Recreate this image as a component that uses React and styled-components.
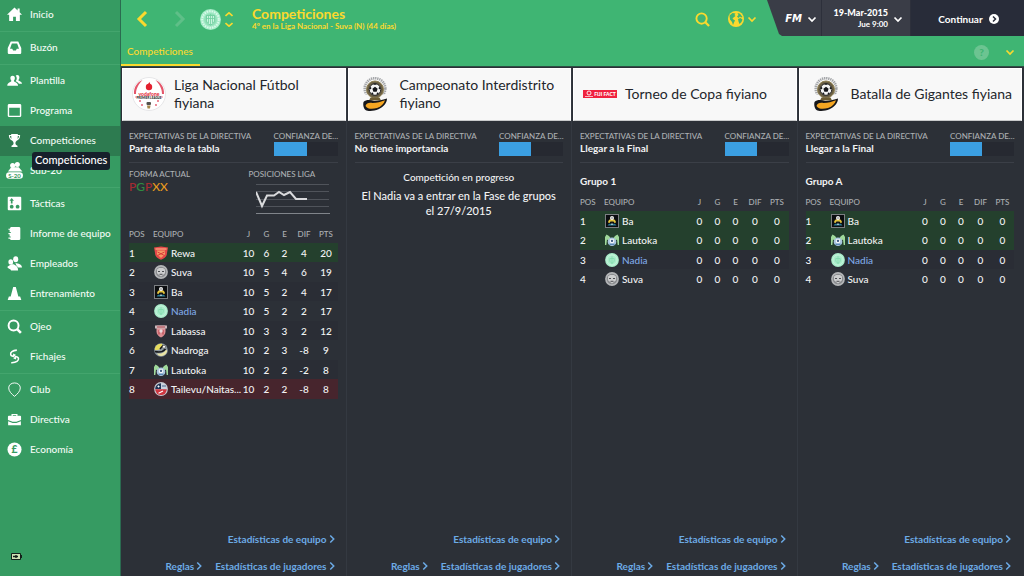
import React from "react";
import styled, { createGlobalStyle, css } from "styled-components";

const GlobalStyle = createGlobalStyle`
  *, *::before, *::after { box-sizing: border-box; }
  body {
    margin: 0;
    background: #2c3037;
    color: #f2f3f4;
    font-family: Lato, "Liberation Sans", sans-serif;
    font-size: 10px;
    font-weight: 500;
    line-height: 12px;
  }
  h1, h2, h3, p, ul, dl, dd { margin: 0; padding: 0; }
  ul { list-style: none; }
  a { color: inherit; text-decoration: none; }
  button { font: inherit; color: inherit; background: none; border: 0; padding: 0; cursor: pointer; }
  svg { display: block; flex: none; }
`;

/* ---------- shell ---------- */

const Shell = styled.div`
  display: grid;
  grid-template-columns: 120px minmax(0, 1fr);
  min-height: 100vh;
`;

const Sidebar = styled.nav`
  display: flex;
  flex-direction: column;
  background: #369b62;
`;

const NavGroup = styled.ul`
  padding-bottom: 1px;
  & + & {
    border-top: 1px solid #43a56d;
    padding-top: 1px;
  }
`;

const NavItem = styled.li`
  position: relative;
`;

const NavLink = styled.a`
  display: flex;
  align-items: center;
  gap: 8px;
  height: 30px;
  padding: 0 0 2px 7px;
  color: #f4fbf6;
  background: ${(p) => (p.$active ? "#2d7b50" : "transparent")};
`;

const Tooltip = styled.span`
  position: absolute;
  z-index: 2;
  left: 32px;
  top: 26px;
  padding: 2px 3px 4px;
  border-radius: 3px;
  background: #17202b;
  color: #fff;
  font-size: 11px;
  white-space: nowrap;
`;

const SidebarFoot = styled.div`
  margin-top: auto;
  padding: 0 0 16px 11px;
`;

const Main = styled.main`
  display: flex;
  flex-direction: column;
  border-left: 1px solid #2b6b50;
`;

/* ---------- header ---------- */

const Header = styled.header`
  background: #3fb573;
  color: #fbd92e;
  border-bottom: 1px solid #2c4f44;
`;

const TopBar = styled.div`
  display: flex;
  height: 36px;
  align-items: stretch;
`;

const History = styled.div`
  display: flex;
  align-items: center;
  gap: 26px;
  padding: 2px 0 0 16px;
`;

const ClubPicker = styled.button`
  display: flex;
  align-items: center;
  gap: 4px;
  margin: 2px 19px 0 15px;
`;

const Heading = styled.div`
  flex: 1;
  min-width: 0;
  padding-top: 6px;
`;

const PageTitle = styled.h1`
  font-size: 14px;
  line-height: 15px;
  font-weight: 700;
`;

const Subtitle = styled.p`
  font-size: 8px;
  line-height: 11px;
  font-weight: 700;
`;

const Tools = styled.div`
  display: flex;
  align-items: center;
  gap: 18px;
  padding: 2px 4px 0 0;
`;

const WorldButton = styled.button`
  display: flex;
  align-items: center;
  gap: 4px;
`;

const StatusPanel = styled.div`
  display: flex;
  margin-left: 7px;
  color: #fff;
  background: #3a3d47;
  clip-path: polygon(0 0, 100% 0, 100% 100%, 15px 100%, 12px 34px);
`;

const MenuButton = styled.button`
  display: flex;
  align-items: center;
  justify-content: flex-end;
  gap: 6px;
  width: ${(p) => p.$width}px;
  padding-right: ${(p) => p.$pad}px;
  padding-top: 2px;
  border-right: 1px solid #2d303b;
`;

const FmMark = styled.span`
  font-family: "DejaVu Sans", sans-serif;
  font-size: 10px;
  font-style: italic;
  font-weight: 700;
`;

const DateText = styled.span`
  display: flex;
  flex-direction: column;
  text-align: right;
  font-size: 8px;
  line-height: 10px;
  font-weight: 700;
  padding-bottom: 3px;
  strong { font-size: 9px; line-height: 13px; }
`;

const ContinueButton = styled.button`
  display: flex;
  align-items: center;
  justify-content: center;
  gap: 6px;
  width: 113px;
  padding: 2px 0 0 2px;
  background: #282c39;
  font-weight: 700;
`;

const TabBar = styled.div`
  display: flex;
  height: 30px;
  align-items: stretch;
  justify-content: space-between;
`;

const Tab = styled.a`
  display: flex;
  align-items: center;
  width: 79px;
  padding: 2px 0 0 6px;
  border-bottom: 2px solid #fbd92e;
`;

const TabTools = styled.div`
  display: flex;
  align-items: center;
  gap: 17px;
  padding: 2px 10px 0 0;
`;

/* ---------- competition columns ---------- */

const Board = styled.div`
  flex: 1;
  display: grid;
  grid-template-columns: repeat(4, minmax(0, 1fr));
  gap: 1px;
  padding: 1px 2px 0 0;
`;

const Column = styled.section`
  display: flex;
  flex-direction: column;
  box-shadow: 1px 0 0 #343941;
  &:last-child { box-shadow: none; }
`;

const Card = styled.header`
  display: grid;
  grid-template-columns: 34px 1fr;
  align-items: center;
  gap: 8px;
  height: 53px;
  margin: 0 0 0 1px;
  padding: 0 2px 2px 9px;
  background: #f8f8f8;
  border: 1px solid #fff;
  border-bottom-color: #c9cbcc;
  color: #23262b;
`;

const CardTitle = styled.h2`
  font-size: 14px;
  line-height: 18px;
  font-weight: 400;
`;

const Body = styled.div`
  flex: 1;
  display: flex;
  flex-direction: column;
  padding: 9px 8px 0;
`;

const Expect = styled.dl`
  display: grid;
  grid-template-columns: 1fr 64px;
  height: 33px;
  border-bottom: 1px solid #3b3f47;
`;

const Label = styled.dt`
  font-size: 8px;
  line-height: 12px;
  color: #adb0b4;
  white-space: nowrap;
`;

const Strong = styled.dd`
  font-weight: 700;
  line-height: 13px;
`;

const Meter = styled.dd`
  height: 14px;
  background: #262931;
`;

const MeterFill = styled.div`
  height: 100%;
  background: #3b9fe2;
`;

const FormRow = styled.dl`
  display: flex;
  justify-content: space-between;
  padding: 5px 8px 0 0;
  height: 62px;
`;

const Form = styled.dd`
  font-size: 12px;
  line-height: 14px;
`;

const FormMark = styled.span`
  color: ${(p) => ({ P: "#a52c31", G: "#2f8b41", X: "#e89a1e" })[p.$kind]};
`;

const ChartBox = styled.dd`
  padding: 3px 0 0 7px;
`;

const Progress = styled.div`
  padding: 8px 4px 0;
  text-align: center;
`;

const ProgressText = styled.p`
  margin-top: 5px;
  font-size: 11px;
  line-height: 15px;
`;

const GroupTitle = styled.h3`
  padding-top: 12px;
  height: 30px;
  font-size: 10px;
  line-height: 13px;
  font-weight: 700;
`;

const Table = styled.table`
  width: 100%;
  table-layout: fixed;
  border-collapse: collapse;
`;

const Th = styled.th`
  width: ${(p) => (p.$width ? p.$width + "px" : "auto")};
  height: 18px;
  padding: 0;
  font-size: 8px;
  line-height: 12px;
  font-weight: 500;
  color: #adb0b4;
  text-align: ${(p) => (p.$left ? "left" : "center")};
`;

const Tr = styled.tr`
  height: 19px;
  &:nth-child(even) { height: 20px; }
  &:nth-child(odd) { background: #2a2d35; }
  ${(p) => p.$tone === "up" && css`&&& { background: #24402d; }`}
  ${(p) => p.$tone === "down" && css`&&& { background: #47252d; }`}
`;

const Td = styled.td`
  padding: 0;
  text-align: ${(p) => (p.$left ? "left" : "center")};
`;

const Team = styled.a`
  display: flex;
  align-items: center;
  gap: 3px;
  padding-left: 1px;
  white-space: nowrap;
  color: ${(p) => (p.$own ? "#7fa9e6" : "inherit")};
`;

const Links = styled.footer`
  display: flex;
  flex-wrap: wrap;
  justify-content: flex-end;
  gap: 15px 13px;
  margin-top: auto;
  padding: 0 3px 4px 0;
  color: #6cabe6;
  font-weight: 700;
`;

const MoreLink = styled.a`
  display: flex;
  align-items: center;
  gap: 2px;
  &:first-child { margin-left: 60px; }
`;

/* ---------- icons ---------- */

const Chevron = ({ dir = "down", w = 8, h = 5, stroke = 1.7, color = "currentColor" }) => {
  const pts = {
    down: "0.500,0.500 4,4 7.500,0.500",
    up: "1,4 4,1 7,4",
    left: "8,1 1,8 8,15",
    right: "1,1 8,8 1,15",
  }[dir];
  const box = dir === "down" || dir === "up" ? "0 0 8 5" : "-1 0 11 16";
  return (
    <svg width={w} height={h} viewBox={box} fill="none" stroke={color} strokeWidth={stroke} overflow="visible" aria-hidden="true">
      <polyline points={pts} />
    </svg>
  );
};

const navIcons = {
  home: <path d="M8 .500 0 8.200h2.300V15h4.200v-4.500h3V15h4.200V8.200H16L13.500 5.700V1.500h-2.200v2.200z" />,
  inbox: <path fillRule="evenodd" d="M4 1.500h8l3.200 7v5.200a1.300 1.300 0 0 1-1.300 1.300H2.100A1.300 1.300 0 0 1 .8 13.700V8.500zM5.200 3.800 3.200 9.300h2.400l.9 2h3l.9-2h2.400l-2-5.500z" />,
  squad: (
    <>
      <path d="M10.800 2c1.800 0 2.600 1.300 2.400 3-.1 1.200-.6 2-1.100 2.500 0 1.200 3.900 1.400 3.900 4h-3.300c-.6-1.500-2-2.300-3.400-2.800.6-.6 1.100-1.700 1.100-3 0-1.200-.4-2-1.100-2.700.4-.6.900-1 1.500-1z" />
      <path d="M6 2.800c1.800 0 2.600 1.300 2.400 2.900-.1 1.300-.6 2.100-1.100 2.600 0 1.500 4.500 1.600 4.500 5.200H.3c0-3.600 4.400-3.700 4.400-5.200-.5-.5-1-1.300-1.100-2.600C3.400 4.100 4.200 2.800 6 2.800z" />
    </>
  ),
  calendar: <path fillRule="evenodd" d="M2.300 1h11.400A1.500 1.500 0 0 1 15.200 2.500v11a1.500 1.500 0 0 1-1.500 1.500H2.300a1.500 1.500 0 0 1-1.500-1.500v-11A1.500 1.500 0 0 1 2.300 1zM2.300 5v8.500h11.400V5z" />,
  cup: <path fillRule="evenodd" d="M4.500 1h7l.1 1.200H14c0 3-1 5.200-3.700 6-.6.8-1.300 1.300-1.300 2.800 0 1.200.8 2 2.200 2.500V15H4.800v-1.500C6.200 13 7 12.200 7 11c0-1.500-.7-2-1.300-2.800C3 7.400 2 5.200 2 2.200h2.400zM3.200 3.300c.2 1.400.6 2.400 1.500 3.100l-.2-3.100zm9.600 0h-1.300l-.2 3.100c.9-.7 1.300-1.700 1.500-3.100z" />,
  tactics: <path fillRule="evenodd" d="M1.800.8h12.400a1 1 0 0 1 1 1v12.400a1 1 0 0 1-1 1H1.800a1 1 0 0 1-1-1V1.800a1 1 0 0 1 1-1zM5 2.200 2.600 5h1.500v3h1.800V5h1.500zM5 9.400a2 2 0 1 0 .01 0zM11.300 9.400a2 2 0 1 0 .01 0z" />,
  report: <path fillRule="evenodd" d="M4 1h8.700a1.500 1.500 0 0 1 1.500 1.500v11a1.500 1.500 0 0 1-1.500 1.500H4L3 13.500H1.500v-1.200H4v-1.100H2.800V8.700H1.500V7.400H4V6.300H2.800V4H1.500V2.800H3z" />,
  staff: (
    <>
      <ellipse cx="9.300" cy="3.500" rx="2.700" ry="3.200" />
      <ellipse cx="4" cy="6.300" rx="2.500" ry="2.800" />
      <path d="M9 7.500c3 .4 7 1.600 7 4.800h-4L10 10zM4 9C6.500 8.500 8.500 9 9.500 10.500c1.500 1 2.300 2.500 2.300 5H4.300C3.800 13 .5 14 .5 11.500z" />
    </>
  ),
  cone: <path d="M6.600 1h2.800l2.700 10.300H14l1.300 3.700H.7L2 11.300h1.900z" />,
  search: (
    <g fill="none" stroke="currentColor">
      <circle cx="7" cy="7" r="5.300" strokeWidth="2.100" />
      <path d="m10.800 10.800 4 4" strokeWidth="2.800" />
    </g>
  ),
  transfer: (
    <g fill="none" stroke="currentColor" strokeWidth="1.700">
      <path d="M10.500 1.200C6 1.500 3.200 3.700 4 6.200c.5 1.500 2 1.800 3.600 1" />
      <path d="M4.500 14.600c5.500.2 8.300-2.200 7.700-4.700-.4-1.500-2-2-3.600-1.200" />
      <path d="M6.500 4.800v4.500L9.500 6zM9.700 6.700v4.500L6.700 10z" fill="currentColor" stroke="none" />
    </g>
  ),
  club: <path fill="none" stroke="currentColor" strokeWidth="1" d="M8 1c3.500 0 6.200 2.200 6.200 5.300C14.200 10 11 12.800 8 15.300 5 12.800 1.800 10 1.800 6.300 1.800 3.200 4.500 1 8 1z" />,
  board: <path fillRule="evenodd" d="M4.800 4V2h6.400v2H14a1 1 0 0 1 1 1v3.500L10 10.300H6L1 8.500V5a1 1 0 0 1 1-1zm1.400 0h3.600v-.9H6.200zM1.200 9.900 6 11.700h4l4.800-1.800V14H1.200z" />,
  youth: (
    <>
      <g transform="translate(1 -3)">
        <circle cx="10" cy="4.600" r="2.700" />
        <circle cx="5" cy="5.600" r="2.700" />
        <path d="M3.500 7.500h8l4 4.500H0z" />
      </g>
      <rect x="-1" y="9.800" width="18" height="7" rx="3.500" />
      <text x="8" y="15.600" fontSize="6.500" fontWeight="700" textAnchor="middle" fill="#369b62">S-20</text>
    </>
  ),
  money: (
    <>
      <circle cx="8" cy="8" r="7.500" />
      <text x="8" y="12" fontSize="11" fontWeight="900" textAnchor="middle" fill="#369b62">£</text>
    </>
  ),
};

const NavIcon = ({ name }) => (
  <svg width="15" height="15" viewBox="0 0 16 16" fill="currentColor" color="#fff" overflow="visible" aria-hidden="true">
    {navIcons[name]}
  </svg>
);

const Battery = () => (
  <svg width="11" height="7" viewBox="0 0 11 7" role="img" aria-label="Batería">
    <rect width="10" height="7" rx="1" fill="#14201a" />
    <rect x="10" y="2" width="1" height="3" fill="#14201a" />
    <rect x="1" y="1" width="8" height="5" fill="#cfe0b4" />
    <path d="M2 3.500h5M5 2v3" stroke="#14201a" strokeWidth="1.400" />
  </svg>
);

const Globe = () => (
  <svg width="16" height="16" viewBox="0 0 16 16" aria-hidden="true">
    <circle cx="8" cy="8" r="8" fill="#fbd92e" />
    <path fill="#3fb573" d="M1.500 4.500 4.500 2l3 .5-1 1.500 1 1L5.500 6.500l-1 1.300L7 9.500l-1 2L5 14l-1-3-2-2.500zM9.500 2l2.500.700 2.500 3.300-1.500.5-1-1-1.500 1.500L9 5.500l1.500-1.500zM10 8l2.500-1 2 1.500-1 2.500-2 2-1-2.500z" />
  </svg>
);

/* ---------- crests ---------- */

const crestArt = {
  Rewa: (
    <>
      <path d="M0 1.500 7 .5l7 1L13 7c0 3.500-2.500 5.500-6 6.700C3.500 12.500 1 10.500 1 7z" fill="#e5484a" />
      <path d="M1.500 2h11v2h-11z" fill="#f2866c" />
      <path d="M3 4.500h8v3.800L7 12 3 8.300z" fill="#f39a63" />
      <path d="m3.500 6 7 3.500M10.500 6l-7 3.500" stroke="#da3c3c" />
    </>
  ),
  Suva: (
    <>
      <circle cx="7" cy="7" r="6.900" fill="#b4b6b8" />
      <circle cx="7" cy="7" r="5.300" fill="#8a8c8f" />
      <path d="M3 4.500 5 3h4l2 1.500v3.700L7 11.500 3 8.200z" fill="#cdcecf" />
      <path d="M4 6.500h2M8 6.500h2M5.500 9.300h3" stroke="#4b4d51" />
    </>
  ),
  Ba: (
    <>
      <rect x=".5" y=".5" width="13" height="13" fill="#0b0d10" stroke="#7b7e82" />
      <path d="M3 8.500C3 6 5 5 7 5s4 1 4 3.500L9.500 9 8.500 7.500h-3L4.500 9z" fill="#e2c33c" />
      <circle cx="7" cy="4" r="2" fill="#f2f2f2" />
      <path d="M6.500 3.500h1v1h-1z" fill="#222" />
      <path d="M2.500 11.500 4 9.800h6l1.500 1.700z" fill="#2c7f96" />
      <path d="m6.300 11 .7-2.500.7 2.500z" fill="#eee" />
    </>
  ),
  Nadia: (
    <>
      <circle cx="7" cy="7" r="6.900" fill="#a9ecca" />
      <circle cx="7" cy="7" r="5.100" fill="none" stroke="#cdf5e0" strokeWidth=".8" />
      <path d="M7 3.200v7.600M4.800 5.500h4.400v2.700L7 10.500 4.800 8.200z" fill="none" stroke="#7bd9a9" strokeWidth=".7" />
    </>
  ),
  Labassa: (
    <>
      <path d="M2.500 1.500h9v6.300c0 2.500-1.800 4.500-4.500 5.800-2.700-1.300-4.500-3.300-4.500-5.800z" fill="#dc8f94" />
      <path d="M1 1.500h12v3H1z" fill="#c9b7bb" />
      <path d="M3 3h8M5 6v4.500M9 6v4.500" stroke="#b8434b" strokeWidth="1.100" />
      <circle cx="7" cy="7" r="1.700" fill="#e9dadd" />
    </>
  ),
  Nadroga: (
    <>
      <circle cx="7" cy="7" r="6.800" fill="#8c98a0" />
      <path d="M.8 5.500C1.500 2.500 4.500.5 8 .8l1 3-4 3-4 .5z" fill="#e7dc5e" />
      <path d="M3 10.500c4 .5 7-.5 9-4l1.300 1.500c-.8 3-3.800 5-6.300 5s-3-1-4-2.500z" fill="#e9e4a4" />
      <path d="M1 8.500c4 1 8 .5 10.500-2.500M6 6l3-3.500" stroke="#17191c" strokeWidth="1.500" fill="none" />
      <circle cx="10" cy="3.800" r="1.500" fill="#fff" stroke="#333" strokeWidth=".5" />
    </>
  ),
  Lautoka: (
    <>
      <path d="M0 12V4l1.500-2.500L4 3l1.500 2h3L10 3l2.500-1.500L14 4v8h-1.300L12 6.500 10 8H4L2 6.500 1.300 12z" fill="#9fd89a" />
      <circle cx="7" cy="8.800" r="4.300" fill="#a9c6de" />
      <circle cx="7" cy="8" r="2.300" fill="#f4f6f8" />
      <path d="m7 6.600 1.200.9-.5 1.400H6.300l-.5-1.400z" fill="#3c5a80" />
      <path d="M4.500 11.300h5" stroke="#4878a8" />
    </>
  ),
  Tailevu: (
    <>
      <circle cx="7" cy="7" r="6.900" fill="#c7ccd3" />
      <path d="M1.200 7A5.800 5.800 0 0 1 7 1.200V7z" fill="#1f3556" />
      <path d="M7 1.200A5.800 5.800 0 0 1 12.800 7H7z" fill="#c9d3df" />
      <path d="M1.200 7.300h11.600A5.800 5.800 0 0 1 1.200 7.300z" fill="#cf3640" />
      <path d="M4.500 11.300 9 9M3.500 4.500h2M4.500 3.500v2" stroke="#fff" strokeWidth="1.100" />
      <path d="M8 4h4" stroke="#4a6288" />
    </>
  ),
};

const Crest = ({ name, size = 14 }) => (
  <svg width={size} height={size} viewBox="0 0 14 14" aria-hidden="true">
    {crestArt[name]}
  </svg>
);

const ClubBadge = () => (
  <svg width="21" height="21" viewBox="0 0 21 21" fill="none" aria-hidden="true">
    <circle cx="10.500" cy="10.500" r="10.500" fill="#a5ebc8" />
    <circle cx="10.500" cy="10.500" r="8.300" stroke="#dcf9ea" strokeWidth="2" strokeDasharray="1.500 1" />
    <circle cx="10.500" cy="10.500" r="6.300" fill="#8fe0b6" />
    <path d="M6.500 6.500h8v5c0 2-1.800 3.500-4 4.500-2.200-1-4-2.500-4-4.500z" fill="#c9f5de" stroke="#5fc492" strokeWidth=".7" />
    <path d="M10.500 5v11M6.500 9.500h8M8.500 7v7M12.500 7v7" stroke="#6fcf9f" strokeWidth=".8" />
  </svg>
);

const LeagueLogo = () => (
  <svg width="34" height="34" viewBox="0 0 34 34" aria-hidden="true">
    <circle cx="17" cy="17" r="16.500" fill="#fff" stroke="#e6e6e8" />
    <path d="M2 17C1.500 10 5.500 5 10.500 3 7 7 4 11 4 17zM32 17C32.500 10 28.500 5 23.500 3c3.500 4 6.500 8 6.500 14z" fill="#e4566a" />
    <circle cx="17" cy="10" r="3.200" fill="#e3202f" />
    <path d="m15 8.500 2.500-3.500 1.300 3.500z" fill="#e3202f" />
    <text x="17" y="18.500" fontSize="5" fontWeight="900" textAnchor="middle" fill="#e3303c">vodafone</text>
    <text x="17" y="22" fontSize="3" fontWeight="900" textAnchor="middle" fill="#222">PREMIER LEAGUE</text>
    <rect x="14.500" y="25" width="4.500" height="3" rx="1" fill="#55534f" />
    <path d="M15 28.500h3.500L18 31.500h-2.500z" fill="#a98a4c" />
    <g fill="#e4566a">
      <circle cx="8" cy="24" r=".9" /><circle cx="10" cy="28" r=".9" />
      <circle cx="26" cy="24" r=".9" /><circle cx="24" cy="28" r=".9" />
      <circle cx="4" cy="20" r=".7" /><circle cx="30" cy="20" r=".7" />
    </g>
  </svg>
);

const FederationLogo = () => (
  <svg width="34" height="34" viewBox="0 0 34 34" aria-hidden="true">
    <circle cx="17" cy="11.500" r="10.300" fill="none" stroke="#a3a5a8" strokeWidth="2.600" strokeDasharray="1.400 .7" />
    <path d="M5 17.500h24V26H5z" fill="#f8f8f8" />
    <circle cx="17" cy="12.500" r="8.500" fill="#6b6045" stroke="#8f8052" />
    <circle cx="17" cy="12.500" r="5.800" fill="#f4f4f4" stroke="#222" />
    <path d="m17 9.800 2.600 1.900-1 3h-3.200l-1-3z" fill="#15161a" />
    <path d="m15.300 7.100 1.700-.6 1.700.6-1.700 1zM11.700 11.500l.8-2 .9 1.500-.5 1.600zM22.300 11.500l-.8-2-.9 1.500.5 1.600zM13.500 16.700l.5-1.600 1.500 1.600-.500 1zM20.500 16.700l-.5-1.600-1.500 1.600.5 1z" fill="#15161a" />
    <path d="M12.500 20.500h9l1.500 3H11z" fill="#6c5c33" />
    <path d="M5.500 25c2.500-2.500 6.500-2.500 10.500-1 3 .3 7.500-1 13-2.500 0 4.500-3.500 8.500-8.500 10.800-4.500 1.900-10.500 2.200-13 .7-2-1.500-2.700-5-2-8z" fill="#17171a" />
    <path d="M7.500 29c.8-3.300 4-3.500 7-3 4.500 0 8.500-1.500 12.500-2.800-1 3.300-3.500 6.300-8 7.800-4.500 1.300-9.500 1.300-11.500-2z" fill="#f5a622" />
  </svg>
);

const CupLogo = () => (
  <svg width="34" height="34" viewBox="0 0 34 34" aria-hidden="true">
    <rect y="13" width="34" height="8" fill="#f0223f" />
    <circle cx="6" cy="16" r="2" fill="none" stroke="#fff" strokeWidth=".9" />
    <path d="M2 19.500h8" stroke="#f7b6bf" />
    <text x="22" y="19.200" fontSize="5" fontWeight="900" textAnchor="middle" fill="#fff">FIJI FACT</text>
  </svg>
);

const LeagueChart = () => (
  <svg width="74" height="32" viewBox="0 0 74 32" role="img" aria-label="Posiciones en la liga">
    <g stroke="#50545b">
      <path d="M0 1.500h73M0 8.500h73M0 16.500h73M0 23.500h73" />
    </g>
    <path d="M0 30.500h74" stroke="#80848a" />
    <polyline points="0,9 6,23 11,12.500 18,12.500 23,9 28,12 34,9 40,16 51,16" fill="none" stroke="#d9dadc" strokeWidth="2" />
  </svg>
);

/* ---------- data ---------- */

const nav = [
  [["home", "Inicio"]],
  [["inbox", "Buzón"]],
  [["squad", "Plantilla"], ["calendar", "Programa"], ["cup", "Competiciones"], ["youth", "Sub-20"]],
  [["tactics", "Tácticas"], ["report", "Informe de equipo"], ["staff", "Empleados"], ["cone", "Entrenamiento"]],
  [["search", "Ojeo"], ["transfer", "Fichajes"]],
  [["club", "Club"], ["board", "Directiva"], ["money", "Economía"]],
];

const league = [
  ["Rewa", "Rewa", [10, 6, 2, 4, 20], "up"],
  ["Suva", "Suva", [10, 5, 4, 6, 19]],
  ["Ba", "Ba", [10, 5, 2, 4, 17]],
  ["Nadia", "Nadia", [10, 5, 2, 2, 17]],
  ["Labassa", "Labassa", [10, 3, 3, 2, 12]],
  ["Nadroga", "Nadroga", [10, 2, 3, -8, 9]],
  ["Lautoka", "Lautoka", [10, 2, 2, -2, 8]],
  ["Tailevu", "Tailevu/Naitas...", [10, 2, 2, -8, 8], "down"],
];

const zeros = [0, 0, 0, 0, 0];
const group = [
  ["Ba", "Ba", zeros, "up"],
  ["Lautoka", "Lautoka", zeros, "up"],
  ["Nadia", "Nadia", zeros],
  ["Suva", "Suva", zeros],
];

/* ---------- pieces ---------- */

const Standings = ({ rows }) => (
  <Table>
    <thead>
      <tr>
        <Th $left $width={24}>POS</Th>
        <Th $left>EQUIPO</Th>
        <Th $width={18}>J</Th>
        <Th $width={18}>G</Th>
        <Th $width={18}>E</Th>
        <Th $width={21}>DIF</Th>
        <Th $width={23}>PTS</Th>
      </tr>
    </thead>
    <tbody>
      {rows.map(([id, name, stats, tone], i) => (
        <Tr key={id} $tone={tone}>
          <Td $left>{i + 1}</Td>
          <Td $left>
            <Team href="#" $own={id === "Nadia"}>
              <Crest name={id} />
              <span>{name}</span>
            </Team>
          </Td>
          {stats.map((n, k) => <Td key={k}>{n}</Td>)}
        </Tr>
      ))}
    </tbody>
  </Table>
);

const More = ({ children }) => (
  <MoreLink href="#">
    {children}
    <Chevron dir="right" w={6} h={8} stroke={3} />
  </MoreLink>
);

const Competition = ({ logo, title, goal, trust, children }) => (
  <Column>
    <Card>
      {logo}
      <CardTitle>{title}</CardTitle>
    </Card>
    <Body>
      <Expect>
        <div>
          <Label>EXPECTATIVAS DE LA DIRECTIVA</Label>
          <Strong>{goal}</Strong>
        </div>
        <div>
          <Label>CONFIANZA DE...</Label>
          <Meter>
            <MeterFill style={{ width: `${trust}%` }} />
          </Meter>
        </div>
      </Expect>
      {children}
      <Links>
        <More>Estadísticas de equipo</More>
        <More>Reglas</More>
        <More>Estadísticas de jugadores</More>
      </Links>
    </Body>
  </Column>
);

export default function App() {
  return (
    <Shell>
      <GlobalStyle />
      <Sidebar>
        {nav.map((items, i) => (
          <NavGroup key={i}>
            {items.map(([icon, label]) => (
              <NavItem key={label}>
                <NavLink href="#" $active={icon === "cup"}>
                  <NavIcon name={icon} />
                  {label}
                </NavLink>
                {icon === "cup" && <Tooltip role="tooltip">{label}</Tooltip>}
              </NavItem>
            ))}
          </NavGroup>
        ))}
        <SidebarFoot><Battery /></SidebarFoot>
      </Sidebar>

      <Main>
        <Header>
          <TopBar>
            <History>
              <button aria-label="Atrás"><Chevron dir="left" w={11} h={16} stroke={3} /></button>
              <button aria-label="Adelante"><Chevron dir="right" w={11} h={16} stroke={3} color="#5fbf88" /></button>
            </History>
            <ClubPicker aria-label="Cambiar de club">
              <ClubBadge />
              <svg width="8" height="15" viewBox="0 0 8 15" fill="none" stroke="currentColor" strokeWidth="1.600" aria-hidden="true">
                <path d="M.5 4 4 .8 7.500 4M.5 11 4 14.200 7.500 11" />
              </svg>
            </ClubPicker>
            <Heading>
              <PageTitle>Competiciones</PageTitle>
              <Subtitle>4º en la Liga Nacional - Suva (N) (44 días)</Subtitle>
            </Heading>
            <Tools>
              <button aria-label="Buscar">
                <svg width="15" height="15" viewBox="0 0 16 16" fill="none" stroke="currentColor" strokeWidth="2" aria-hidden="true">
                  <circle cx="7" cy="7" r="5.500" />
                  <path d="m11 11 4 4" strokeWidth="2.400" />
                </svg>
              </button>
              <WorldButton aria-label="Mundo">
                <Globe />
                <Chevron />
              </WorldButton>
            </Tools>
            <StatusPanel>
              <MenuButton $width={55} $pad={5} aria-label="Menú de FM">
                <FmMark>FM</FmMark>
                <Chevron />
              </MenuButton>
              <MenuButton $width={89} $pad={8}>
                <DateText>
                  <strong>19-Mar-2015</strong>
                  <span>Jue 9:00</span>
                </DateText>
                <Chevron />
              </MenuButton>
              <ContinueButton>
                Continuar
                <svg width="10" height="10" viewBox="0 0 10 10" aria-hidden="true">
                  <circle cx="5" cy="5" r="5" fill="#fff" />
                  <path d="m4 2.500 2.500 2.500L4 7.500" fill="none" stroke="#282c39" strokeWidth="1.500" />
                </svg>
              </ContinueButton>
            </StatusPanel>
          </TopBar>
          <TabBar>
            <Tab href="#" aria-current="page">Competiciones</Tab>
            <TabTools>
              <button aria-label="Ayuda">
                <svg width="15" height="15" viewBox="0 0 15 15" aria-hidden="true">
                  <circle cx="7.500" cy="7.500" r="7.500" fill="#6cc491" />
                  <text x="7.500" y="11" fontSize="10" fontWeight="900" textAnchor="middle" fill="#3fb573">?</text>
                </svg>
              </button>
              <button aria-label="Más"><Chevron /></button>
            </TabTools>
          </TabBar>
        </Header>

        <Board>
          <Competition logo={<LeagueLogo />} title="Liga Nacional Fútbol fiyiana" goal="Parte alta de la tabla" trust={53}>
            <FormRow>
              <div>
                <Label>FORMA ACTUAL</Label>
                <Form>
                  {[..."PGPXX"].map((k, i) => <FormMark key={i} $kind={k}>{k}</FormMark>)}
                </Form>
              </div>
              <div>
                <Label>POSICIONES LIGA</Label>
                <ChartBox><LeagueChart /></ChartBox>
              </div>
            </FormRow>
            <Standings rows={league} />
          </Competition>

          <Competition logo={<FederationLogo />} title="Campeonato Interdistrito fiyiano" goal="No tiene importancia" trust={50}>
            <Progress>
              <p>Competición en progreso</p>
              <ProgressText>El Nadia va a entrar en la Fase de grupos el 27/9/2015</ProgressText>
            </Progress>
          </Competition>

          <Competition logo={<CupLogo />} title="Torneo de Copa fiyiano" goal="Llegar a la Final" trust={50}>
            <GroupTitle>Grupo 1</GroupTitle>
            <Standings rows={group} />
          </Competition>

          <Competition logo={<FederationLogo />} title="Batalla de Gigantes fiyiana" goal="Llegar a la Final" trust={50}>
            <GroupTitle>Grupo A</GroupTitle>
            <Standings rows={group} />
          </Competition>
        </Board>
      </Main>
    </Shell>
  );
}
